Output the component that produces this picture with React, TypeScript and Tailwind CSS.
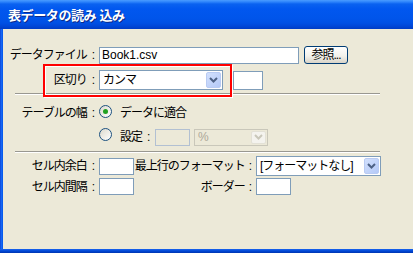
import React from "react";

const Chevron = ({ color }: { color: string }) => (
  <svg width="9" height="6" viewBox="0 0 9 6">
    <path d="M1 1 L4.5 4.5 L8 1" fill="none" stroke={color} strokeWidth="2" />
  </svg>
);

const DropBtn = ({ disabled }: { disabled?: boolean }) =>
  disabled ? (
    <div className="w-[15px] h-full rounded-[2px] border border-[#e3e1d6] bg-[#f4f3ee] flex items-center justify-center">
      <Chevron color="#c9c7ba" />
    </div>
  ) : (
    <div className="w-[15px] h-full rounded-[2px] border border-[#b9cbf3] bg-[linear-gradient(135deg,#d2e0fd,#b4c9f7)] flex items-center justify-center">
      <Chevron color="#4d6185" />
    </div>
  );

const Radio = ({ checked }: { checked?: boolean }) => (
  <div className="w-[13px] h-[13px] rounded-full border border-[#1c5180] bg-[linear-gradient(135deg,#dcd9cd,#ffffff)] flex items-center justify-center shrink-0">
    {checked && <div className="w-[5px] h-[5px] rounded-full bg-[#21a121]" />}
  </div>
);

const Input = ({ w, h = 17, value }: { w: number; h?: number; value?: string }) => (
  <div
    className="border border-[#7f9db9] bg-white flex items-center pl-[2px] tracking-normal"
    style={{ width: w, height: h }}
  >
    {value}
  </div>
);

const Label = ({ text, w, pr = 3, gap = 5 }: { text: string; w: number; pr?: number; gap?: number }) => (
  <div className="flex justify-end items-center shrink-0 whitespace-nowrap" style={{ width: w, paddingRight: pr }}>
    <span className="shrink-0">{text}</span>
    <span className="shrink-0" style={{ marginLeft: gap }}>:</span>
  </div>
);

export default function App() {
  return (
    <div className="w-[413px] h-[253px] flex flex-col overflow-hidden font-['Liberation_Sans','Noto_Sans_CJK_JP',sans-serif] text-[12px] text-black leading-none">
      {/* title bar */}
      <div className="h-[29px] shrink-0 flex items-center pl-[8px] pt-[1px] bg-[linear-gradient(180deg,#4a9cff_0px,#2c83fb_2px,#0a62f0_4px,#0157ef_9px,#0055eb_18px,#0050e4_23px,#0047d8_26px,#003cc4_29px)]">
        <span className="text-white font-bold text-[13px] tracking-[-0.4px] text-shadow-[1px_1px_0_#0a2a8a]">
          表データの読み&nbsp;込み
        </span>
      </div>
      <div className="flex flex-1">
        <div className="w-[3px] bg-[linear-gradient(90deg,#0a3ed0,#1a6af5_40%,#0055ea)]" />
        <div className="flex-1 bg-[#ece9d8] relative flex flex-col pt-[17px] tracking-[-1px]">
          {/* row 1 */}
          <div className="flex items-center h-[18px]">
            <Label w={94} text="データファイル" />
            <div className="ml-[2px]">
              <Input w={200} value="Book1.csv" />
            </div>
            <button className="ml-[5px] w-[44px] h-[18px] rounded-[3px] border border-[#003c74] bg-[linear-gradient(180deg,#ffffff,#f3f2ec_55%,#d9d4c8)] text-[12px] leading-none flex items-center justify-center">
              参照...
            </button>
          </div>
          {/* row 2 */}
          <div className="flex items-center h-[20px] mt-[6px]">
            <Label w={94} text="区切り" />
            <div className="ml-[2px] w-[124px] h-[20px] border border-[#7f9db9] bg-white flex items-center p-[1px]">
              <span className="flex-1 pl-[2px]">カンマ</span>
              <DropBtn />
            </div>
            <div className="ml-[10px]">
              <Input w={30} h={19} />
            </div>
          </div>
          {/* separator */}
          <div className="mt-[3px] ml-[12px] w-[365px] border-t border-[#999891] border-b border-b-white" />
          {/* radio row 1 */}
          <div className="flex items-center h-[18px] mt-[9px]">
            <Label w={94} text="テーブルの幅" />
            <div className="ml-[2px] self-start mt-[1px]">
              <Radio checked />
            </div>
            <span className="ml-[8px]">データに適合</span>
          </div>
          {/* radio row 2 */}
          <div className="flex items-center h-[18px] mt-[6px]">
            <div className="w-[94px]" />
            <div className="ml-[2px] self-start">
              <Radio />
            </div>
            <div className="ml-[8px] w-[35px] flex items-center">
              <span>設定</span>
              <span className="ml-[5px]">:</span>
            </div>
            <div className="w-[35px] h-[17px] border border-[#b2c0d2] bg-[#ece9d8]" />
            <div className="ml-[4px] w-[74px] h-[17px] border border-[#c9c7ba] bg-[#ece9d8] flex items-center p-[1px]">
              <span className="flex-1 pl-[2px] text-[#aca899]">%</span>
              <DropBtn disabled />
            </div>
          </div>
          {/* separator */}
          <div className="mt-[5px] ml-[12px] w-[365px] border-t border-[#999891] border-b border-b-white" />
          {/* row cell padding */}
          <div className="flex items-center h-[20px] mt-[3px]">
            <Label w={94} text="セル内余白" />
            <div className="ml-[2px]">
              <Input w={35} />
            </div>
            <Label w={120} pr={3} gap={4} text="最上行のフォーマット" />
            <div className="ml-[2px] w-[125px] h-[20px] border border-[#7f9db9] bg-white flex items-center p-[1px]">
              <span className="flex-1 pl-[2px]">[フォーマットなし]</span>
              <DropBtn />
            </div>
          </div>
          {/* row cell spacing */}
          <div className="flex items-center h-[17px] mt-[2px]">
            <Label w={94} text="セル内間隔" />
            <div className="ml-[2px]">
              <Input w={35} />
            </div>
            <Label w={120} pr={3} gap={4} text="ボーダー" />
            <div className="ml-[2px]">
              <Input w={35} />
            </div>
          </div>
          {/* red annotation box */}
          <div className="absolute left-[40px] top-[35px] w-[189px] h-[33px] border-2 border-[#ff0000] shadow-[1px_1px_0_#ffffff,inset_1px_1px_0_#ffffff] pointer-events-none" />
        </div>
      </div>
      <div className="h-[4px] shrink-0 bg-[linear-gradient(180deg,#1a64ee,#0048d6_50%,#0035b0)]" />
    </div>
  );
}
